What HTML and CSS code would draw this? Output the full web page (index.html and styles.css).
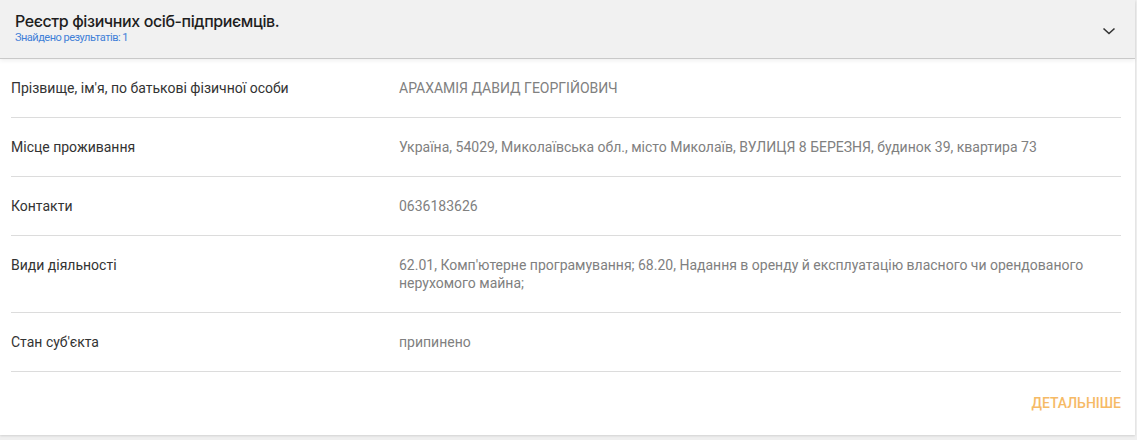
FILE: index.html
```html
<!DOCTYPE html>
<html lang="uk">
<head>
<meta charset="utf-8">
<link rel="stylesheet" href="styles.css">
</head>
<body>
<div class="card">
  <div class="head">
    <div class="head-text">
      <div class="title">Реєстр фізичних осіб-підприємців.</div>
      <div class="found">Знайдено результатів: 1</div>
    </div>
    <svg class="chev" width="14" height="10" viewBox="0 0 14 10"><path d="M1.5 2.5 L7 7.5 L12.5 2.5" fill="none" stroke="#333" stroke-width="1.6"/></svg>
  </div>
  <div class="body">
    <div class="row"><div class="label">Прізвище, ім'я, по батькові фізичної особи</div><div class="value">АРАХАМІЯ ДАВИД ГЕОРГІЙОВИЧ</div></div>
    <div class="row"><div class="label">Місце проживання</div><div class="value">Україна, 54029, Миколаївська обл., місто Миколаїв, ВУЛИЦЯ 8 БЕРЕЗНЯ, будинок 39, квартира 73</div></div>
    <div class="row"><div class="label">Контакти</div><div class="value">0636183626</div></div>
    <div class="row"><div class="label">Види діяльності</div><div class="value">62.01, Комп'ютерне програмування; 68.20, Надання в оренду й експлуатацію власного чи орендованого нерухомого майна;</div></div>
    <div class="row"><div class="label">Стан суб'єкта</div><div class="value">припинено</div></div>
    <div class="actions"><a class="more">ДЕТАЛЬНІШЕ</a></div>
  </div>
</div>
</body>
</html>
```
FILE: styles.css
```css
html, body { margin: 0; padding: 0; background: #efefef; }
body { font-family: Roboto, "Noto Sans", sans-serif; width: 1137px; height: 440px; overflow: hidden; }
.card { width: 1135px; background: #fff; box-shadow: 0 1px 2px rgba(0,0,0,0.12); height: 435px; }
.head { height: 59px; background: #f1f1f1; border-bottom: 1px solid #c9c9c9; display: flex; align-items: center; justify-content: space-between; padding: 0 19px 0 15px; box-shadow: 0 2px 4px rgba(0,0,0,0.06); position: relative; box-sizing: border-box; }
.head-text { display: flex; flex-direction: column; padding-bottom: 3px; }
.title { font-family: Inter, Roboto, sans-serif; font-size: 16px; font-weight: 500; color: #1e1e1e; letter-spacing: -0.4px; line-height: 20px; }
.found { font-size: 11px; color: #3f7fd8; letter-spacing: -0.5px; line-height: 13px; }
.chev { margin-top: 4px; }
.body { padding: 0 14px 0 11px; }
.row { display: flex; padding: 20px 0; border-bottom: 1px solid #dcdcdc; font-size: 14px; line-height: 18px; }
.label { width: 388px; color: #333; flex: none; }
.value { color: #808080; flex: 1; padding-right: 20px; }
.actions { display: flex; justify-content: flex-end; padding-top: 22px; }
.more { font-size: 14px; font-weight: 500; color: #f6ba66; line-height: 18px; }
```
